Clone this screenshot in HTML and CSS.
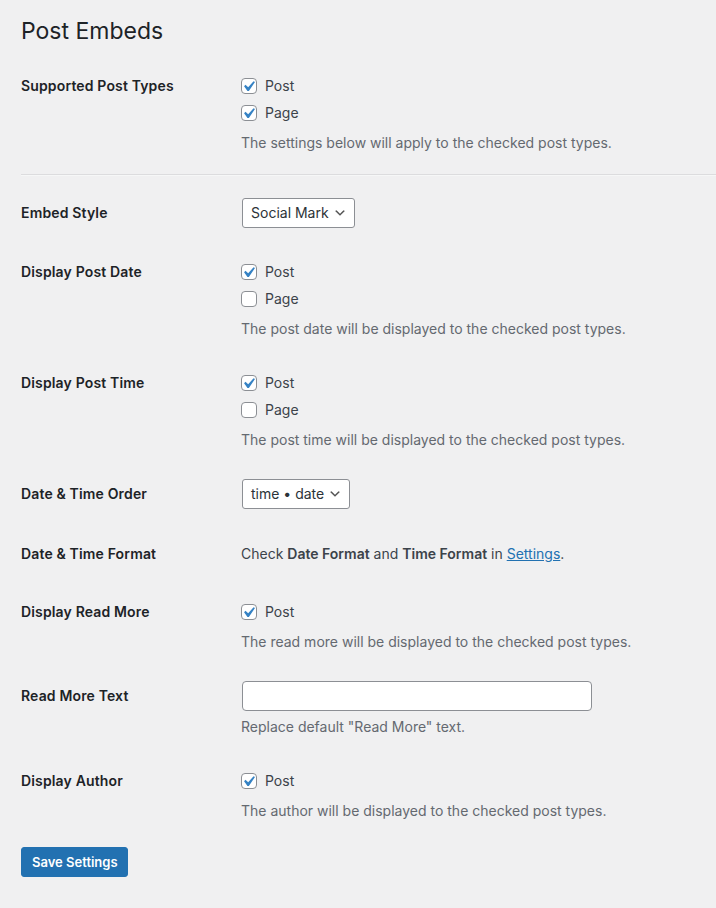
FILE: index.html
```html
<!DOCTYPE html>
<html>
<head>
<meta charset="utf-8">
<link rel="stylesheet" href="styles.css">
</head>
<body>
<div class="wrap">
  <h1 class="title">Post Embeds</h1>

  <div class="row row-check">
    <div class="th">Supported Post Types</div>
    <div class="td">
      <div class="options">
        <label class="opt"><span class="cb on"><svg viewBox="0 0 20 20"><path d="M14.83 4.89l1.34.94-5.81 8.38H9.02L5.78 9.67l1.34-1.25 2.57 2.4z"/></svg></span>Post</label>
        <label class="opt"><span class="cb on"><svg viewBox="0 0 20 20"><path d="M14.83 4.89l1.34.94-5.81 8.38H9.02L5.78 9.67l1.34-1.25 2.57 2.4z"/></svg></span>Page</label>
      </div>
      <p class="desc">The settings below will apply to the checked post types.</p>
    </div>
  </div>

  <hr class="sep">

  <div class="row row-select">
    <div class="th">Embed Style</div>
    <div class="td">
      <span class="select">Social Mark<svg class="arrow" viewBox="0 0 20 20"><path d="M5 6l5 5 5-5 2 1-7 7-7-7 2-1z"/></svg></span>
    </div>
  </div>

  <div class="row row-check">
    <div class="th">Display Post Date</div>
    <div class="td">
      <div class="options">
        <label class="opt"><span class="cb on"><svg viewBox="0 0 20 20"><path d="M14.83 4.89l1.34.94-5.81 8.38H9.02L5.78 9.67l1.34-1.25 2.57 2.4z"/></svg></span>Post</label>
        <label class="opt"><span class="cb"></span>Page</label>
      </div>
      <p class="desc">The post date will be displayed to the checked post types.</p>
    </div>
  </div>

  <div class="row row-check">
    <div class="th">Display Post Time</div>
    <div class="td">
      <div class="options">
        <label class="opt"><span class="cb on"><svg viewBox="0 0 20 20"><path d="M14.83 4.89l1.34.94-5.81 8.38H9.02L5.78 9.67l1.34-1.25 2.57 2.4z"/></svg></span>Post</label>
        <label class="opt"><span class="cb"></span>Page</label>
      </div>
      <p class="desc">The post time will be displayed to the checked post types.</p>
    </div>
  </div>

  <div class="row row-select">
    <div class="th">Date &amp; Time Order</div>
    <div class="td">
      <span class="select">time • date<svg class="arrow" viewBox="0 0 20 20"><path d="M5 6l5 5 5-5 2 1-7 7-7-7 2-1z"/></svg></span>
    </div>
  </div>

  <div class="row row-text">
    <div class="th">Date &amp; Time Format</div>
    <div class="td">
      <p class="line">Check <strong>Date Format</strong> and <strong>Time Format</strong> in <a href="#">Settings</a>.</p>
    </div>
  </div>

  <div class="row row-check">
    <div class="th">Display Read More</div>
    <div class="td">
      <div class="options">
        <label class="opt"><span class="cb on"><svg viewBox="0 0 20 20"><path d="M14.83 4.89l1.34.94-5.81 8.38H9.02L5.78 9.67l1.34-1.25 2.57 2.4z"/></svg></span>Post</label>
      </div>
      <p class="desc">The read more will be displayed to the checked post types.</p>
    </div>
  </div>

  <div class="row row-input">
    <div class="th">Read More Text</div>
    <div class="td">
      <span class="input"></span>
      <p class="desc desc-tight">Replace default "Read More" text.</p>
    </div>
  </div>

  <div class="row row-check">
    <div class="th">Display Author</div>
    <div class="td">
      <div class="options">
        <label class="opt"><span class="cb on"><svg viewBox="0 0 20 20"><path d="M14.83 4.89l1.34.94-5.81 8.38H9.02L5.78 9.67l1.34-1.25 2.57 2.4z"/></svg></span>Post</label>
      </div>
      <p class="desc">The author will be displayed to the checked post types.</p>
    </div>
  </div>

  <div class="actions">
    <span class="button">Save Settings</span>
  </div>
</div>
</body>
</html>
```

FILE: styles.css
```css
html, body {
  margin: 0;
  padding: 0;
  background: #f0f0f1;
}
body {
  font-family: Inter, "Noto Sans", sans-serif;
  font-size: 14px;
  color: #3c434a;
  width: 716px;
  height: 908px;
  overflow: hidden;
}
.wrap {
  padding-left: 21px;
}
.title {
  margin: 0;
  padding-top: 16px;
  font-size: 23px;
  font-weight: 400;
  line-height: 30px;
  color: #1d2327;
  height: 43px;
}
.row {
  display: flex;
  padding: 0 0 17px;
}
.th {
  width: 220px;
  flex: none;
  padding-top: 17px;
  line-height: 20px;
  font-weight: 600;
  letter-spacing: 0.15px;
  color: #1d2327;
}
.td {
  flex: 1;
  padding-top: 17px;
}
.row-select .td,
.row-input .td {
  padding-top: 12px;
}
.row-text {
  padding-bottom: 21px;
}
.row-text .td,
.row-text .th {
  padding-top: 18px;
}
.options {
  display: flex;
  flex-direction: column;
  gap: 7px;
}
.opt {
  display: flex;
  align-items: center;
  height: 20px;
  line-height: 20px;
  color: #3c434a;
}
.cb {
  width: 14px;
  height: 14px;
  border: 1px solid #8c8f94;
  border-radius: 4px;
  background: #fff;
  margin-right: 8px;
  position: relative;
  flex: none;
}
.cb svg {
  position: absolute;
  left: -4px;
  top: -3px;
  width: 21px;
  height: 21px;
  fill: #3582c4;
}
.desc {
  margin: 10px 0 0;
  line-height: 20px;
  color: #646970;
}
.desc-tight {
  margin-top: 6px;
}
.line {
  margin: 0;
  line-height: 20px;
}
.line strong {
  font-weight: 600;
  color: #3c434a;
}
.line a {
  color: #2271b1;
  text-decoration: underline;
}
.sep {
  margin: 3.5px 0 10px;
  border: 0;
  border-top: 1px solid #dcdcde;
  border-bottom: 1px solid #f6f7f7;
  height: 0;
}
.select {
  display: inline-flex;
  align-items: center;
  box-sizing: border-box;
  height: 30px;
  margin-left: 1px;
  padding: 0 7px 0 8px;
  border: 1px solid #8c8f94;
  border-radius: 3px;
  background: #fff;
  color: #2c3338;
  line-height: 28px;
}
.select .arrow {
  width: 14px;
  height: 14px;
  margin-left: 4px;
  fill: #555;
}
.input {
  display: block;
  box-sizing: border-box;
  width: 350px;
  height: 30px;
  margin-left: 1px;
  border: 1px solid #8c8f94;
  border-radius: 4px;
  background: #fff;
}
.actions {
  padding-top: 9px;
}
.button {
  display: inline-block;
  box-sizing: border-box;
  height: 30px;
  line-height: 28px;
  padding: 0 9px 0 10px;
  background: #2271b1;
  border: 1px solid #2271b1;
  border-radius: 3px;
  color: #fff;
  font-size: 13px;
  font-weight: 600;
}
```
